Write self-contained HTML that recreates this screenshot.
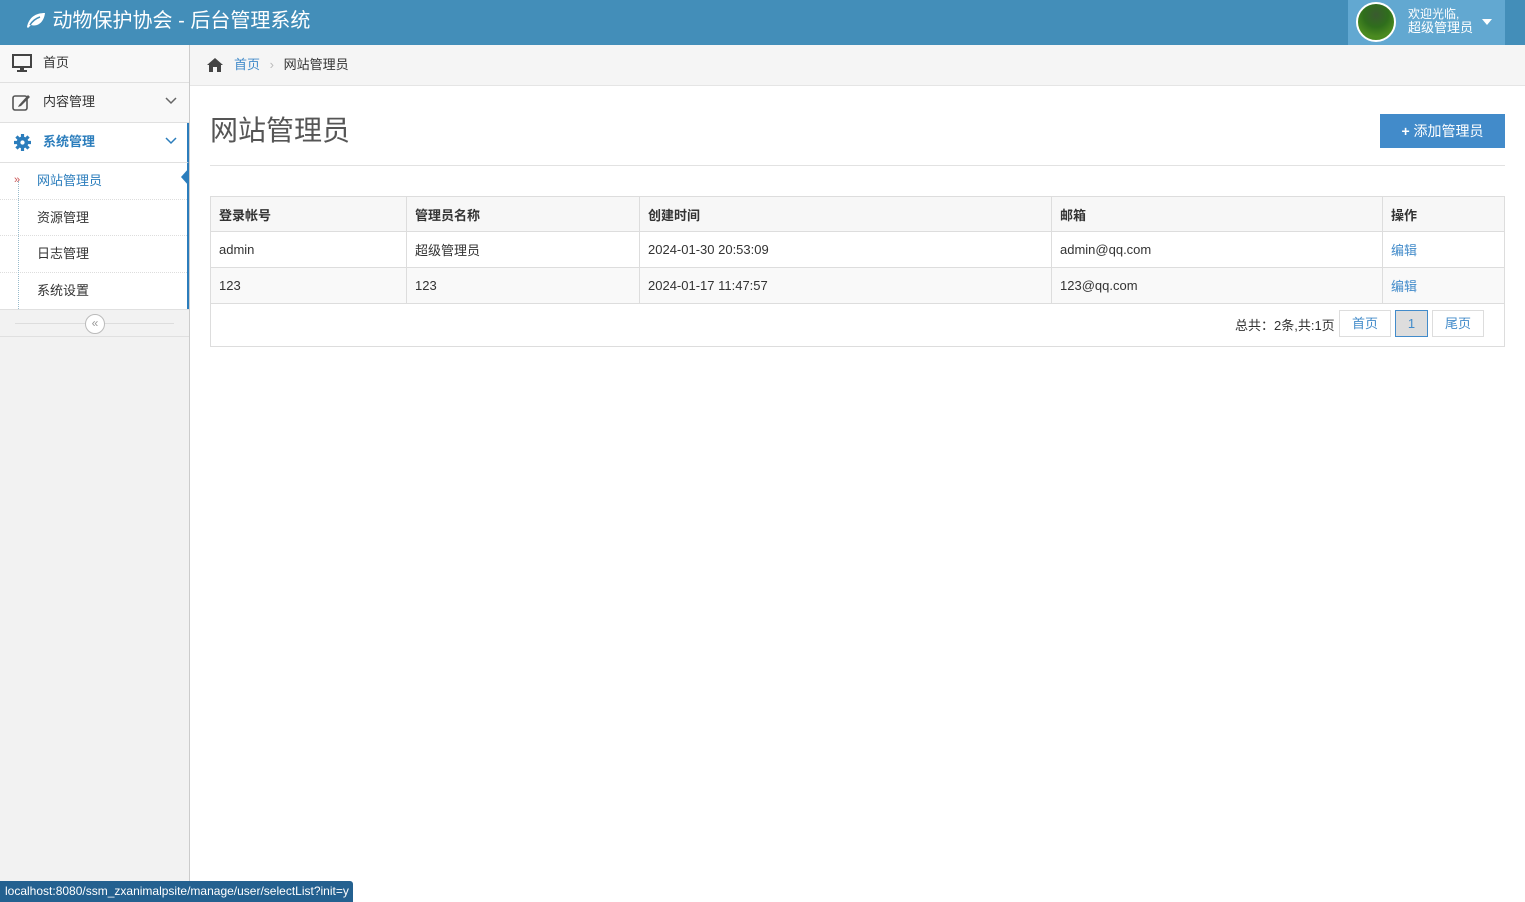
<!DOCTYPE html>
<html><head><meta charset="utf-8"><style>
*{margin:0;padding:0;box-sizing:border-box}
body{width:1525px;height:902px;overflow:hidden;font-family:"Liberation Sans","Noto Sans CJK SC",sans-serif;font-size:13px;color:#333;background:#fff;position:relative}
.top{position:absolute;left:0;top:0;width:1525px;height:45px;background:#438eb9}
.logo{position:absolute;left:25px;top:8px;color:#fff;font-size:20px;line-height:26px}
.user{position:absolute;left:1348px;top:0;width:157px;height:45px;background:#62a8d1;color:#fff;font-size:12px}
.avatar{position:absolute;left:8px;top:2px;width:40px;height:40px;border-radius:50%;border:2px solid #fff;background:radial-gradient(circle at 50% 30%,#3a5a30 0,#2f6e1c 40%,#4a8a20 70%)}
.side{position:absolute;left:0;top:45px;width:190px;height:857px;background:#f2f2f2;border-right:1px solid #ccc}
.mi{height:40px;border-bottom:1px solid #e0e0e0;background:#f8f8f8;position:relative;line-height:38px;padding-left:43px}
.sub{background:#fff;height:37px;line-height:35px;padding-left:37px;border-bottom:1px dotted #ddd;position:relative}
.bc{position:absolute;left:190px;top:45px;right:0;height:41px;background:#f5f5f5;border-bottom:1px solid #e5e5e5;line-height:40px;padding-left:44px}
h1{position:absolute;left:210px;top:109px;font-size:28px;font-weight:normal;color:#555}
.hr{position:absolute;left:210px;top:165px;width:1295px;border-top:1px solid #e2e2e2}
.btn{position:absolute;left:1380px;top:114px;width:125px;height:34px;background:#428bca;color:#fff;font-size:14px;line-height:34px;text-align:center}
table{position:absolute;left:210px;top:196px;width:1295px;border-collapse:collapse}
td,th{border:1px solid #ddd;height:36px;padding-left:8px;text-align:left;font-size:13px}
th{background:#f7f7f7;font-weight:bold;height:35px}
.foot{position:absolute;left:210px;top:302px;width:1295px;height:45px;border:1px solid #ddd;border-top:none}
.pg{position:absolute;top:8px;height:27px;border:1px solid #ddd;color:#428bca;text-align:center;line-height:25px}
a{color:#428bca}
.chev{position:absolute;left:165px;top:14px}
</style></head><body>
<div class="top"><div class="logo"><svg width="22" height="18" viewBox="0 0 22 18" style="vertical-align:-2px"><path d="M2 16C4 6 11 2 20 2C19 11 13 16 6 14L3 17Z" fill="#fff"/><path d="M5 14C8 9 12 7 15 6" stroke="#438eb9" stroke-width="1.5" fill="none"/></svg> 动物保护协会 - 后台管理系统</div>
<div class="user"><div class="avatar"></div><div style="position:absolute;left:60px;top:7px;line-height:14px">欢迎光临,<br><span style="font-size:13px">超级管理员</span></div><div style="position:absolute;left:134px;top:19px;border:5px solid transparent;border-top:6px solid #fff"></div></div></div>
<div class="side">
<div class="mi" style="height:38px;line-height:36px"><svg style="position:absolute;left:12px;top:9px" width="20" height="18" viewBox="0 0 20 18"><rect x="1" y="1" width="18" height="12" fill="none" stroke="#444" stroke-width="2"/><rect x="8" y="13" width="4" height="3" fill="#444"/><rect x="5" y="16" width="10" height="2" fill="#444"/></svg>首页</div>
<div class="mi"><svg style="position:absolute;left:12px;top:10px" width="20" height="18" viewBox="0 0 20 18"><rect x="1" y="3" width="14" height="14" rx="2" fill="none" stroke="#555" stroke-width="1.6"/><path d="M7 12L16 2L18 4L9 13L6 14Z" fill="#555"/></svg>内容管理<svg class="chev" width="12" height="8" viewBox="0 0 12 8"><path d="M1 1L6 6L11 1" stroke="#666" stroke-width="1.5" fill="none"/></svg></div>
<div class="mi" style="background:#fff;color:#2b7dbc;font-weight:bold;border-right:2px solid #2b7dbc"><svg style="position:absolute;left:14px;top:11px" width="17" height="17" viewBox="0 0 16 16"><circle cx="8" cy="8" r="5.5" fill="#2b7dbc"/><g stroke="#2b7dbc" stroke-width="3"><path d="M8 0V16M0 8H16M2.3 2.3L13.7 13.7M13.7 2.3L2.3 13.7"/></g><circle cx="8" cy="8" r="2" fill="#fff"/></svg>系统管理<svg class="chev" width="12" height="8" viewBox="0 0 12 8"><path d="M1 1L6 6L11 1" stroke="#2b7dbc" stroke-width="1.5" fill="none"/></svg></div>
<div style="border-right:2px solid #2b7dbc;position:relative">
<div class="sub" style="color:#2b7dbc"><span style="position:absolute;left:14px;color:#c55;font-size:11px">»</span>网站管理员<div style="position:absolute;right:-2px;top:5px;border:9px solid transparent;border-right:8px solid #2b7dbc;border-left:none;height:0"></div></div>
<div class="sub" style="height:36px">资源管理</div><div class="sub">日志管理</div><div class="sub" style="border-bottom:none;height:36px">系统设置</div>
<div style="position:absolute;left:18px;top:18px;bottom:0;border-left:1px dotted #9bc"></div></div>
<div style="height:28px;border-top:1px solid #e0e0e0;border-bottom:1px solid #e0e0e0;position:relative;background:#f2f2f2"><div style="position:absolute;left:15px;right:15px;top:13px;border-top:1px solid #ddd"></div><div style="position:absolute;left:85px;top:4px;width:20px;height:20px;border-radius:50%;border:1px solid #bbb;background:#fff;font-size:12px;line-height:17px;text-align:center;color:#999">«</div></div>
</div>
<div class="bc"><svg style="position:absolute;left:16px;top:12px" width="18" height="16" viewBox="0 0 18 16"><path d="M9 1L1 8H3V15H7V10H11V15H15V8H17Z" fill="#444"/></svg><a>首页</a> <span style="color:#bbb;margin:0 6px">›</span> 网站管理员</div>
<h1>网站管理员</h1><div class="hr"></div>
<div class="btn"><b>+</b> 添加管理员</div>
<table><tr><th style="width:196px">登录帐号</th><th style="width:233px">管理员名称</th><th style="width:412px">创建时间</th><th style="width:331px">邮箱</th><th>操作</th></tr>
<tr><td>admin</td><td>超级管理员</td><td>2024-01-30 20:53:09</td><td>admin@qq.com</td><td><a>编辑</a></td></tr>
<tr style="background:#f9f9f9"><td>123</td><td>123</td><td>2024-01-17 11:47:57</td><td>123@qq.com</td><td><a>编辑</a></td></tr></table>
<div class="foot"><span style="position:absolute;left:1024px;top:13px">总共：2条,共:1页</span>
<div class="pg" style="left:1128px;width:52px">首页</div><div class="pg" style="left:1184px;width:33px;background:#ddd;border-color:#428bca">1</div><div class="pg" style="left:1221px;width:52px">尾页</div></div>
<div style="position:absolute;left:0;top:881px;height:21px;width:353px;background:#246190;color:#fff;font-size:12px;line-height:21px;padding-left:5px;border-radius:0 3px 0 0">localhost:8080/ssm_zxanimalpsite/manage/user/selectList?init=y</div>
</body></html>
